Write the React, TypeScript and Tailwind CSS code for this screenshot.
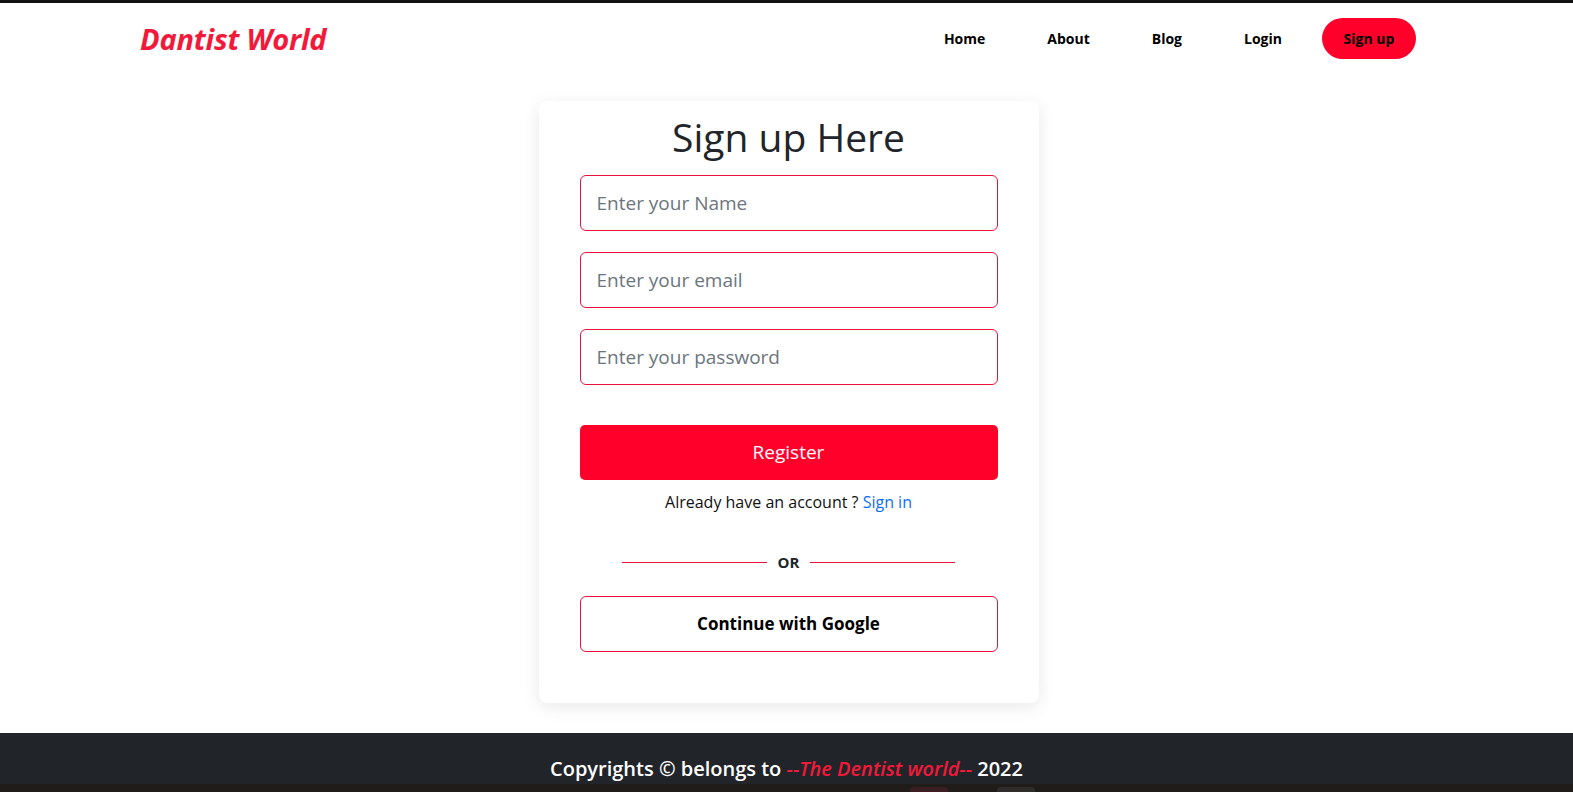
import React from "react";

const font = { fontFamily: '"Open Sans", "Noto Sans", sans-serif' };

export default function App() {
  return (
    <div className="min-h-[792px] bg-white flex flex-col" style={font}>
      <div className="h-[3px] bg-[#111111]" />
      <nav className="h-[70px] flex items-center justify-between pl-[140px] pr-[157px]">
        <div className="text-[29px] font-bold italic text-[#f2193a] tracking-[-0.2px] mt-[1px]">Dantist World</div>
        <div className="flex items-center text-[14px] font-bold text-black">
          <a className="px-[31px]">Home</a>
          <a className="px-[31px]">About</a>
          <a className="px-[31px]">Blog</a>
          <a className="px-[31px]">Login</a>
          <a className="ml-[9px] h-[41px] w-[94px] rounded-full bg-[#ff002b] flex items-center justify-center">Sign up</a>
        </div>
      </nav>
      <main className="flex justify-center pt-[28px] pb-[30px] pl-[4px]">
        <div className="w-[500px] h-[602px] rounded-[8px] bg-white shadow-[0_4px_18px_rgba(0,0,0,0.09)] flex flex-col items-center pt-[8px]">
          <h1 className="text-[39px] leading-[56px] font-medium text-[#212529]">Sign up Here</h1>
          <div className="w-[418px] flex flex-col gap-[21px] mt-[10px]">
            <input className="h-[56px] w-full rounded-[6px] border border-[#e8123c] px-[16px] text-[19px] placeholder-[#6c757d] outline-none" placeholder="Enter your Name" />
            <input className="h-[56px] w-full rounded-[6px] border border-[#e8123c] px-[16px] text-[19px] placeholder-[#6c757d] outline-none" placeholder="Enter your email" />
            <input className="h-[56px] w-full rounded-[6px] border border-[#e8123c] px-[16px] text-[19px] placeholder-[#6c757d] outline-none" placeholder="Enter your password" />
          </div>
          <button className="mt-[40px] w-[418px] h-[55px] rounded-[5px] bg-[#ff002b] text-white text-[19px]">Register</button>
          <p className="mt-[10px] text-[16px] text-[#111111] font-medium">
            Already have an account ? <span className="text-[#0d6efd] font-normal">Sign in</span>
          </p>
          <div className="mt-[37px] flex items-center">
            <div className="w-[145px] h-px bg-[#e8123c]" />
            <span className="mx-[11px] text-[15px] font-bold text-[#212529]">OR</span>
            <div className="w-[145px] h-px bg-[#e8123c]" />
          </div>
          <button className="mt-[22px] w-[418px] h-[56px] rounded-[6px] border border-[#e8123c] text-[17px] font-bold text-black">Continue with Google</button>
        </div>
      </main>
      <footer className="h-[51px] bg-[#212529] flex items-end justify-center">
        <p className="text-[20px] leading-[30px] font-semibold text-white">
          Copyrights © belongs to <span className="italic text-[#f2193a]">--The Dentist world--</span> 2022
        </p>
      </footer>
      <div className="h-[8px] bg-[#1f1c19] relative">
        <div className="absolute left-[910px] top-[3px] w-[38px] h-[5px] rounded-t-[4px] bg-[#3a1e22]" />
        <div className="absolute left-[997px] top-[3px] w-[38px] h-[5px] rounded-t-[4px] bg-[#2f2d2b]" />
      </div>
    </div>
  );
}
